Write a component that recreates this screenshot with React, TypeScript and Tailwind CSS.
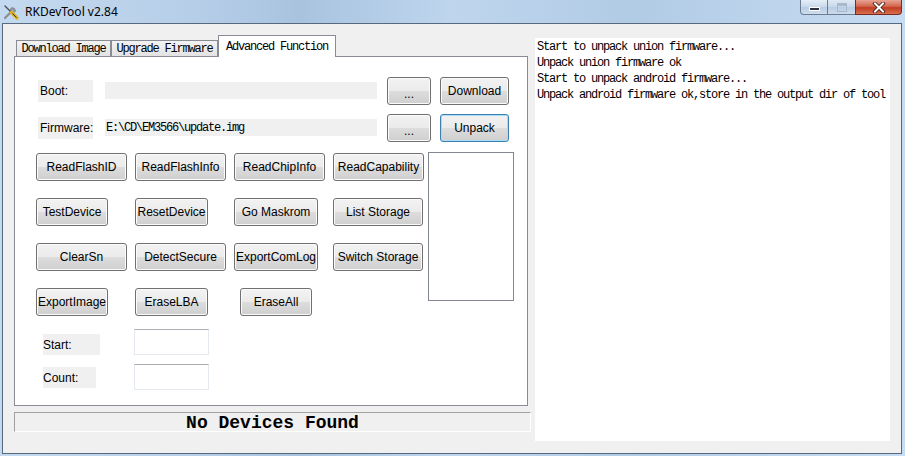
import React from "react";

const btnBase =
  "flex items-center justify-center h-[28px] rounded-[3px] border bg-[linear-gradient(to_bottom,#f2f2f2_0%,#ebebeb_50%,#dddddd_50%,#cfcfcf_100%)] text-[12px] text-black whitespace-nowrap font-['Liberation_Sans',Arial,sans-serif]";
const btn = btnBase + " border-[#707070] shadow-[inset_0_0_0_1px_#fbfbfb]";
const btnFocus = btnBase + " border-[#3c7fb1] shadow-[inset_0_0_0_1px_#a9dcf6]";

const mono = "font-['Liberation_Mono',monospace] text-[12px] tracking-[-1.2px]";

const rows = [
  [
    { t: "ReadFlashID", w: "w-[91px]" },
    { t: "ReadFlashInfo", w: "w-[91px]" },
    { t: "ReadChipInfo", w: "w-[91px]" },
    { t: "ReadCapability", w: "w-[91px]" },
  ],
  [
    { t: "TestDevice", w: "w-[72px]" },
    { t: "ResetDevice", w: "w-[73px]" },
    { t: "Go Maskrom", w: "w-[84px]" },
    { t: "List Storage", w: "w-[90px]" },
  ],
  [
    { t: "ClearSn", w: "w-[91px]" },
    { t: "DetectSecure", w: "w-[91px]" },
    { t: "ExportComLog", w: "w-[84px]" },
    { t: "Switch Storage", w: "w-[90px]" },
  ],
  [
    { t: "ExportImage", w: "w-[72px]" },
    { t: "EraseLBA", w: "w-[73px]" },
    { t: "EraseAll", w: "w-[72px] ml-[6px]" },
  ],
];

const logLines = [
  "Start to unpack union firmware...",
  "Unpack union firmware ok",
  "Start to unpack android firmware...",
  "Unpack android firmware ok,store in the output dir of tool",
];

function ToolIcon() {
  return (
    <svg width="16" height="16" viewBox="0 0 16 16">
      {/* wrench */}
      <path d="M2 14 L11 5" stroke="#8a8f96" strokeWidth="2.2" strokeLinecap="round" />
      <path d="M10 3.5 A2.6 2.6 0 1 0 12.5 6 L11.2 5.6 L10.4 4.8 Z" fill="#9aa0a8" stroke="#6b7078" strokeWidth="0.6" />
      {/* screwdriver */}
      <path d="M2 2 L8.5 8.5" stroke="#4a4e55" strokeWidth="1.4" strokeLinecap="round" />
      <path d="M8.5 8.5 L14 14" stroke="#e2b21c" strokeWidth="3.2" strokeLinecap="round" />
      <path d="M9.5 9.5 L13.5 13.5" stroke="#1e1e1e" strokeWidth="0.9" />
    </svg>
  );
}

function TitleBar() {
  return (
    <div className="flex h-[23px] items-start">
      <div className="flex h-full flex-1 items-center pl-[3px]">
        <ToolIcon />
        <span className="ml-[6px] text-[12px] text-black font-['Noto_Sans',sans-serif]">RKDevTool v2.84</span>
      </div>
      <div className="mr-[3px] flex h-[15px]">
        <div className="flex w-[28px] items-end justify-center rounded-bl-[4px] border border-t-0 border-[#6b7d93] bg-[linear-gradient(to_bottom,#e4edf7,#c9d9ea_50%,#b7cbe1_51%,#cfdeee)] pb-[3px]">
          <div className="h-[4px] w-[11px] border border-white bg-[#2b3340]" />
        </div>
        <div className="flex w-[27px] items-center justify-center border-b border-[#6b7d93] bg-[linear-gradient(to_bottom,#dfe9f5,#c7d7e9_50%,#b9cde2_51%,#cbdbec)]">
          <div className="h-[9px] w-[10px] border border-[#aab9ca] bg-transparent shadow-[inset_0_2px_0_#aab9ca]" />
        </div>
        <div className="flex w-[47px] items-center justify-center rounded-br-[4px] border border-t-0 border-[#7b2a1f] bg-[linear-gradient(to_bottom,#e8a493,#d2664f_45%,#c03c22_55%,#d8704e)]">
          <svg width="14" height="11" viewBox="0 0 14 11">
            <path d="M3 1.5 L11 9.5 M11 1.5 L3 9.5" stroke="#3a1a14" strokeWidth="3.6" strokeLinecap="square" />
            <path d="M3 1.5 L11 9.5 M11 1.5 L3 9.5" stroke="#ffffff" strokeWidth="2" strokeLinecap="square" />
          </svg>
        </div>
      </div>
    </div>
  );
}

function PathRow({ label, value, right, focus }: { label: string; value: string; right: string; focus?: boolean }) {
  return (
    <div className="flex h-[27px] items-center">
      <div className="ml-[2px] flex h-[22px] w-[55px] items-center bg-[#f0f0f0] pl-[2px] text-[12px] text-black font-['Liberation_Sans',Arial,sans-serif]">
        {label}
      </div>
      <div className={`ml-[12px] flex h-[17px] w-[272px] items-center bg-[#f0f0f0] pl-[1px] text-black ${mono}`}>{value}</div>
      <button className={`${btn} ml-[10px] h-[27px] w-[44px]`}>
        <span className="mt-[6px]">...</span>
      </button>
      <button className={`${focus ? btnFocus : btn} ml-[9px] h-[27px] w-[69px]`}>{right}</button>
    </div>
  );
}

function Panel() {
  return (
    <div className="h-[350px] w-[514px] border border-[#898c95] bg-white pl-[21px] pt-[20px]">
      <PathRow label="Boot:" value="" right="Download" />
      <div className="mt-[10px]">
        <PathRow label="Firmware:" value="E:\CD\EM3566\update.img" right="Unpack" focus />
      </div>
      <div className="mt-[12px] flex">
        <div className="grid w-[388px] grid-cols-4 gap-x-[8px] gap-y-[17px]">
          {rows.map((r, i) =>
            [0, 1, 2, 3].map((j) => (
              <div key={`${i}-${j}`} className="flex h-[28px] w-[91px]">
                {r[j] ? <button className={`${btn} ${r[j].w}`}>{r[j].t}</button> : null}
              </div>
            ))
          )}
        </div>
        <div className="ml-[4px] mt-[-1px] h-[149px] w-[86px] border border-[#828790] bg-white" />
      </div>
      <div className="mt-[13px] flex">
        <div className="w-[98px]">
          <div className="ml-[7px] mt-[5px] flex h-[21px] w-[57px] items-center bg-[#f0f0f0] text-[12px] text-black font-['Liberation_Sans',Arial,sans-serif]">
            Start:
          </div>
        </div>
        <div className="h-[26px] w-[75px] border border-[#e3e9ef] border-t-[#abadb3] bg-white" />
      </div>
      <div className="mt-[9px] flex">
        <div className="w-[98px]">
          <div className="ml-[7px] mt-[3px] flex h-[21px] w-[53px] items-center bg-[#f0f0f0] text-[12px] text-black font-['Liberation_Sans',Arial,sans-serif]">
            Count:
          </div>
        </div>
        <div className="h-[26px] w-[75px] border border-[#e3e9ef] border-t-[#abadb3] bg-white" />
      </div>
    </div>
  );
}

function Tabs() {
  const tab = "flex items-center justify-center border border-b-0 border-[#898c95] text-black " + mono;
  return (
    <div className="flex h-[20px] items-end pl-[2px]">
      <div className={`${tab} h-[16px] w-[95px] bg-[linear-gradient(to_bottom,#f2f2f2,#e3e3e3)]`}>Download Image</div>
      <div className={`${tab} h-[16px] w-[107px] bg-[linear-gradient(to_bottom,#f2f2f2,#e3e3e3)]`}>Upgrade Firmware</div>
      <div className={`${tab} relative z-10 mb-[-1px] h-[22px] w-[118px] items-start bg-white pt-[2px]`}>Advanced Function</div>
    </div>
  );
}

export default function App() {
  return (
    <div className="flex h-[456px] w-[905px] flex-col overflow-hidden bg-[linear-gradient(to_right,#c3d9ef_0%,#b8cfe9_20%,#a9c3df_33%,#bed5ed_50%,#b2cbe5_70%,#c6dcf2_100%)]">
      <TitleBar />
      <div className="ml-[2px] mr-[3px] flex h-[431px] border border-[#56697f] bg-[#f0f0f0]">
        <div className="flex w-[528px] flex-col pl-[11px] pt-[12px]">
          <Tabs />
          <Panel />
          <div className="mt-[6px] flex h-[20px] w-[517px] items-center justify-center border border-[#a0a0a0] border-b-white border-r-white pt-[2px] font-['Liberation_Mono',monospace] text-[18px] font-bold text-black">
            No Devices Found
          </div>
        </div>
        <div className={`ml-[4px] mt-[14px] h-[403px] w-[355px] bg-white pl-[2px] pt-[1px] leading-[16px] text-black ${mono}`}>
          {logLines.map((l) => (
            <div key={l} className="whitespace-pre">{l}</div>
          ))}
        </div>
      </div>
    </div>
  );
}
